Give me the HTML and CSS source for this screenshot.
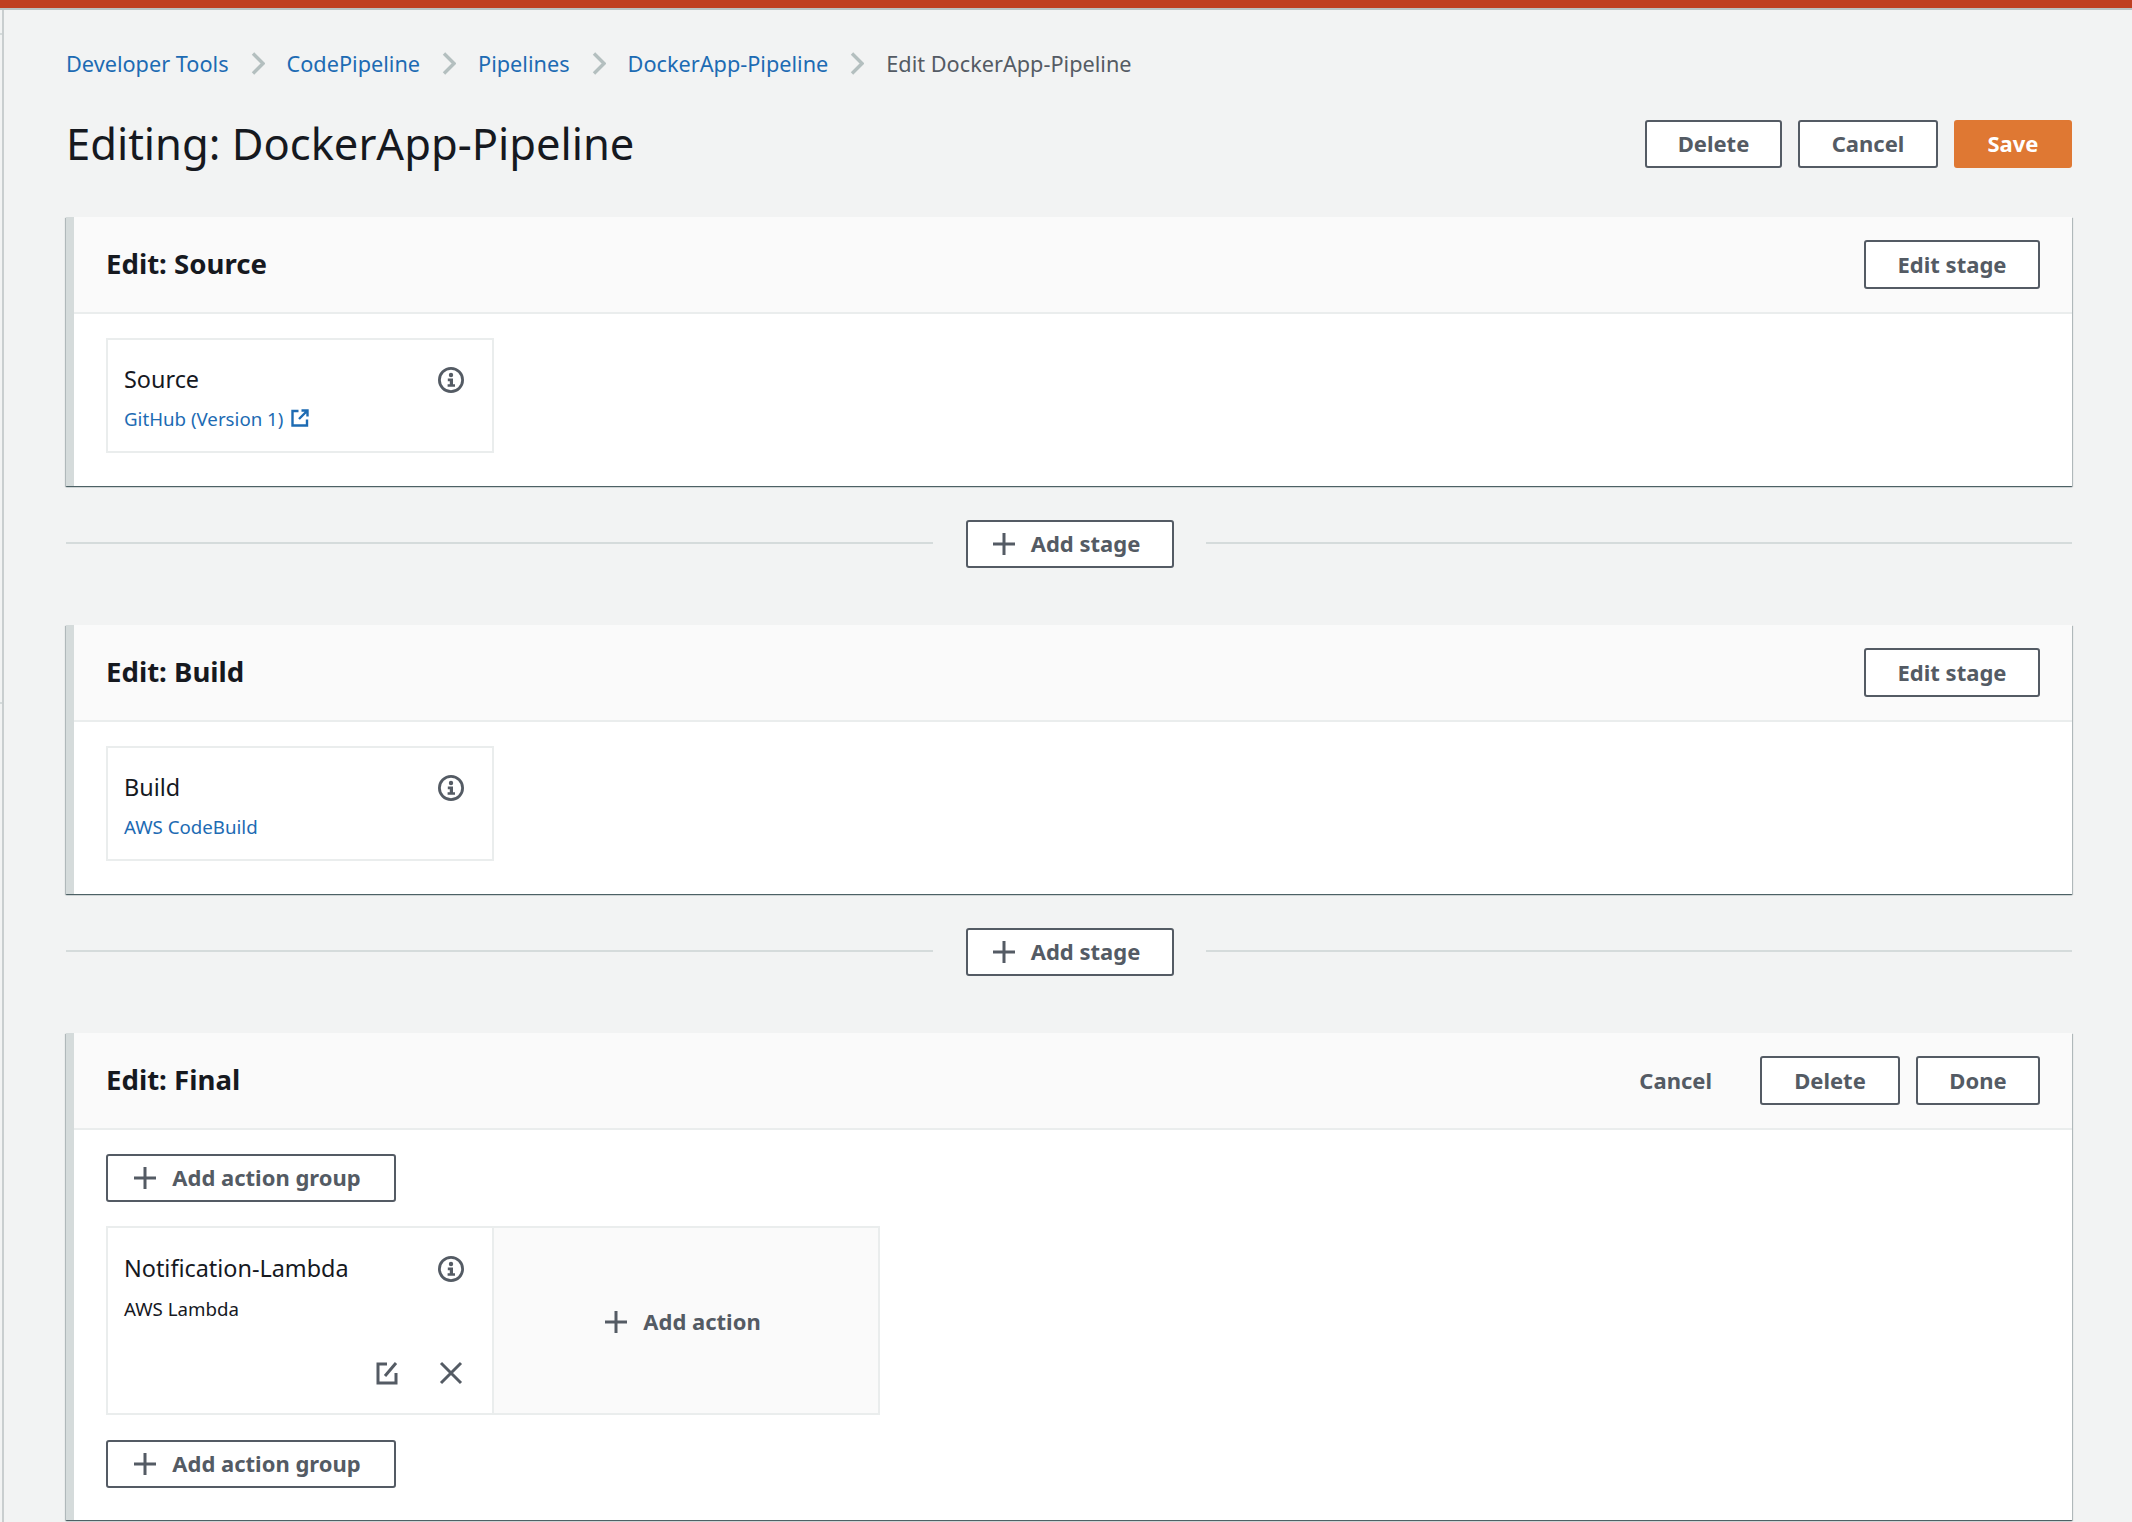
FILE: index.html
```html
<!DOCTYPE html>
<html lang="en">
<head>
  <meta charset="UTF-8">
  <meta name="viewport" content="width=device-width, initial-scale=1.0">
  <title>Editing: DockerApp-Pipeline</title>
  <link rel="stylesheet" href="styles.css">
</head>
<body>
  <svg class="defs" width="0" height="0" aria-hidden="true">
    <symbol id="i-chevron" viewBox="0 0 14 23"><path d="M2 1.5 12 11.5 2 21.5" fill="none" stroke="currentColor" stroke-width="3.4"/></symbol>
    <symbol id="i-plus" viewBox="0 0 24 24"><path d="M12 1v22M1 12h22" fill="none" stroke="currentColor" stroke-width="3"/></symbol>
    <symbol id="i-info" viewBox="0 0 28 28">
      <circle cx="14" cy="14" r="11.6" fill="none" stroke="currentColor" stroke-width="2.8"/>
      <circle cx="14" cy="9" r="2.2" fill="currentColor"/>
      <path d="M10.8 12.6h5.2v5.6h2v2.6h-7.4v-2.6h2.2v-3H10.8z" fill="currentColor"/>
    </symbol>
    <symbol id="i-external" viewBox="0 0 18 18">
      <path d="M7.5 2H1.5v14.5H16V10.5M10.5 1.5h6v6M16 2 8 10" fill="none" stroke="currentColor" stroke-width="2.4"/>
    </symbol>
    <symbol id="i-edit" viewBox="0 0 22 24">
      <path d="M11 3H2v19h18v-10" fill="none" stroke="currentColor" stroke-width="3"/>
      <path d="M9 15 20 2" fill="none" stroke="currentColor" stroke-width="3"/>
    </symbol>
    <symbol id="i-close" viewBox="0 0 24 24"><path d="M2 2l20 20M22 2 2 22" fill="none" stroke="currentColor" stroke-width="3"/></symbol>
  </svg>

  <div class="topbar"></div>

  <main class="page">
    <nav class="crumbs">
      <a href="#">Developer Tools</a>
      <svg class="chevron"><use href="#i-chevron"/></svg>
      <a href="#">CodePipeline</a>
      <svg class="chevron"><use href="#i-chevron"/></svg>
      <a href="#">Pipelines</a>
      <svg class="chevron"><use href="#i-chevron"/></svg>
      <a href="#">DockerApp-Pipeline</a>
      <svg class="chevron"><use href="#i-chevron"/></svg>
      <span>Edit DockerApp-Pipeline</span>
    </nav>

    <header class="title-row">
      <h1>Editing: DockerApp-Pipeline</h1>
      <div class="actions">
        <button class="btn btn-delete" type="button">Delete</button>
        <button class="btn btn-cancel" type="button">Cancel</button>
        <button class="btn btn-save" type="button">Save</button>
      </div>
    </header>

    <section class="stage">
      <div class="stage-head">
        <h2>Edit: Source</h2>
        <button class="btn btn-edit" type="button">Edit stage</button>
      </div>
      <div class="stage-body">
        <div class="action-card">
          <div class="action-top">
            <span class="action-name">Source</span>
            <svg class="info"><use href="#i-info"/></svg>
          </div>
          <a class="provider" href="#">GitHub (Version 1)<svg class="external"><use href="#i-external"/></svg></a>
        </div>
      </div>
    </section>

    <div class="add-row">
      <button class="btn btn-add" type="button"><svg class="plus"><use href="#i-plus"/></svg>Add stage</button>
    </div>

    <section class="stage">
      <div class="stage-head">
        <h2>Edit: Build</h2>
        <button class="btn btn-edit" type="button">Edit stage</button>
      </div>
      <div class="stage-body">
        <div class="action-card">
          <div class="action-top">
            <span class="action-name">Build</span>
            <svg class="info"><use href="#i-info"/></svg>
          </div>
          <a class="provider" href="#">AWS CodeBuild</a>
        </div>
      </div>
    </section>

    <div class="add-row">
      <button class="btn btn-add" type="button"><svg class="plus"><use href="#i-plus"/></svg>Add stage</button>
    </div>

    <section class="stage">
      <div class="stage-head">
        <h2>Edit: Final</h2>
        <div class="stage-actions">
          <button class="btn-link" type="button">Cancel</button>
          <button class="btn btn-delete" type="button">Delete</button>
          <button class="btn btn-done" type="button">Done</button>
        </div>
      </div>
      <div class="stage-body stage-body-edit">
        <button class="btn btn-group" type="button"><svg class="plus"><use href="#i-plus"/></svg>Add action group</button>
        <div class="action-group">
          <div class="action-card action-card-edit">
            <div class="action-top">
              <span class="action-name">Notification-Lambda</span>
              <svg class="info"><use href="#i-info"/></svg>
            </div>
            <span class="provider provider-plain">AWS Lambda</span>
            <div class="action-tools">
              <svg class="tool-edit"><use href="#i-edit"/></svg>
              <svg class="tool-close"><use href="#i-close"/></svg>
            </div>
          </div>
          <div class="add-action"><svg class="plus"><use href="#i-plus"/></svg>Add action</div>
        </div>
        <button class="btn btn-group" type="button"><svg class="plus"><use href="#i-plus"/></svg>Add action group</button>
      </div>
    </section>
  </main>
</body>
</html>
```

FILE: styles.css
```css
html, body {
  height: 1522px;
  overflow: hidden;
}
body {
  margin: 0;
  padding: 0;
  background: #f2f3f3;
  font-family: "Noto Sans", Arial, sans-serif;
  color: #16191f;
}
/* little ticks left of the page edge */
body::before,
body::after {
  content: "";
  position: absolute;
  left: 0;
  width: 2px;
  height: 2px;
  background: #d5dbdb;
}
body::before { top: 33px; }
body::after { top: 702px; }
.defs {
  display: block;
  position: absolute;
}
.topbar {
  height: 8px;
  background: #bf3f22;
  border-bottom: 2px solid #b9c2c4;
}
.page {
  height: 1512px;
  margin-left: 2px;
  border-left: 2px solid #c9cecf;
  background: #f2f3f3;
  padding: 0 60px 0 62px;
}

/* breadcrumb */
.crumbs {
  display: flex;
  align-items: center;
  height: 30px;
  padding-top: 38px;
  font-size: 21.7px;
  color: #545b64;
}
.crumbs a {
  color: #1d6bb3;
  text-decoration: none;
}
.chevron {
  width: 14px;
  height: 23px;
  margin: 0 22px;
  color: #b4bfbf;
}

/* title */
.title-row {
  display: flex;
  align-items: center;
  justify-content: space-between;
  height: 48px;
  margin-top: 42px;
  margin-bottom: 49px;
}
h1 {
  margin: 0 0 2px;
  font-size: 43.5px;
  font-weight: 400;
  color: #16191f;
}
.actions {
  display: flex;
  gap: 16px;
}

/* buttons */
.btn {
  display: inline-flex;
  align-items: center;
  justify-content: center;
  height: 48px;
  padding: 0 0 2px;
  border: 2px solid #545b64;
  border-radius: 3px;
  background: #fff;
  color: #545b64;
  font: 700 22px "Noto Sans", Arial, sans-serif;
}
.btn-delete { width: 137px; }
.btn-cancel { width: 140px; }
.btn-save {
  width: 118px;
  background: #df7833;
  border-color: #df7833;
  color: #fff;
}
.btn-edit {
  width: 176px;
  height: 49px;
}
.btn-done {
  width: 124px;
  height: 49px;
}
.stage-actions .btn-delete {
  width: 140px;
  height: 49px;
}
.btn-add {
  width: 208px;
  margin-left: 1px;
  padding-right: 7px;
}
.btn-group {
  width: 290px;
  padding-right: 8px;
}
.btn-link {
  margin-right: 32px;
  padding: 0 0 2px;
  border: 0;
  background: none;
  color: #545b64;
  font: 700 22px "Noto Sans", Arial, sans-serif;
}
.plus {
  width: 24px;
  height: 24px;
  margin: 2px 15px 0 0;
  color: #545b64;
}

/* stage */
.stage {
  background: #fff;
  border-left: 8px solid #d5dbdb;
  box-shadow: 0 1px 1px 0 rgba(0, 28, 36, 0.5), 1px 1px 1px 0 rgba(0, 28, 36, 0.2), -1px 1px 1px 0 rgba(0, 28, 36, 0.2);
}
.stage-head {
  display: flex;
  align-items: center;
  justify-content: space-between;
  height: 95px;
  padding: 0 32px;
  background: #fafafa;
  border-bottom: 2px solid #eaeded;
}
h2 {
  margin: 0 0 4px;
  font-size: 27.6px;
  font-weight: 700;
  color: #16191f;
}
.stage-actions {
  display: flex;
  align-items: center;
  gap: 16px;
}
.stage-body {
  padding: 24px 32px 33px;
}
.stage-body-edit {
  display: flex;
  flex-direction: column;
  align-items: flex-start;
  gap: 25px;
  padding-bottom: 32px;
}

/* action cards */
.action-card {
  box-sizing: border-box;
  width: 388px;
  height: 115px;
  padding: 22px 16px 0 16px;
  background: #fff;
  border: 2px solid #eaeded;
}
.action-top {
  display: flex;
  align-items: center;
  justify-content: space-between;
  height: 32px;
  padding-right: 11px;
}
.action-name {
  margin-top: 2px;
  font-size: 23.4px;
  color: #16191f;
}
.info {
  width: 28px;
  height: 28px;
  margin-top: 4px;
  color: #545b64;
}
.provider {
  display: flex;
  align-items: center;
  margin-top: 11px;
  font-size: 18.7px;
  line-height: 28px;
  color: #1d6bb3;
  text-decoration: none;
}
.provider-plain {
  color: #16191f;
  margin-top: 12px;
}
.external {
  width: 18px;
  height: 18px;
  margin-left: 8px;
  margin-bottom: 3px;
}
.action-group {
  display: flex;
  width: 774px;
  height: 189px;
  margin-top: -1px;
}
.action-card-edit {
  height: 189px;
  padding-top: 23px;
  flex: none;
}
.action-tools {
  display: flex;
  justify-content: flex-end;
  align-items: center;
  gap: 41px;
  margin-top: 38px;
  padding-right: 13px;
}
.tool-edit {
  width: 22px;
  height: 24px;
  color: #545b64;
}
.tool-close {
  width: 24px;
  height: 24px;
  color: #545b64;
}
.add-action {
  flex: 1;
  display: flex;
  align-items: center;
  justify-content: center;
  padding-right: 7px;
  background: #fafafa;
  border: 2px solid #eaeded;
  border-left: 0;
  color: #545b64;
  font-size: 22px;
  font-weight: 700;
}

/* divider between stages */
.add-row {
  display: flex;
  align-items: center;
  gap: 32px;
  height: 48px;
  margin: 34px 0 57px;
}
.add-row::before,
.add-row::after {
  content: "";
  flex: 1;
  height: 2px;
  margin-bottom: 2px;
  background: #d5dbdb;
}
```
